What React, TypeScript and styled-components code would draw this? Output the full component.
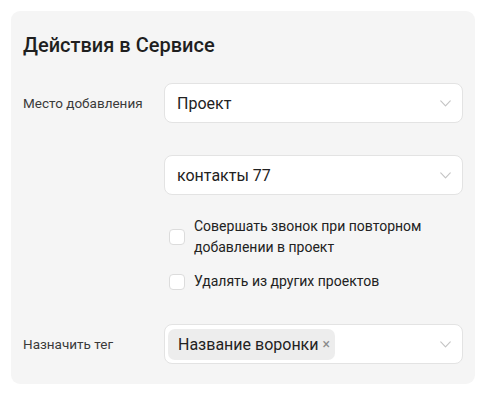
import styled, { createGlobalStyle } from 'styled-components';

const GlobalStyle = createGlobalStyle`
  html, body {
    margin: 0;
    padding: 0;
    background: #ffffff;
    font-family: Roboto, "Noto Sans", Arial, sans-serif;
    -webkit-font-smoothing: antialiased;
  }
  * {
    box-sizing: border-box;
  }
`;

const Chevron = () => (
  <svg width="11" height="7" viewBox="0 0 11 7" fill="none">
    <path d="M0.75 0.9L5.5 5.8L10.25 0.9" stroke="#c4c4c4" strokeWidth="1.1" strokeLinecap="round" strokeLinejoin="round" />
  </svg>
);

const Select = ({ children }: { children: React.ReactNode }) => (
  <SelectBox>
    <SelectValue>{children}</SelectValue>
    <Chevron />
  </SelectBox>
);

const Checkbox = ({ label }: { label: React.ReactNode }) => (
  <CheckRow>
    <CheckSquare />
    <CheckText>{label}</CheckText>
  </CheckRow>
);

export default function App() {
  return (
    <Page>
      <GlobalStyle />
      <Card>
        <Title>Действия в Сервисе</Title>
        <Form>
          <Label>Место добавления</Label>
          <Select>Проект</Select>

          <span />
          <Select>контакты 77</Select>

          <span />
          <CheckList>
            <Checkbox label={<>Совершать звонок при повторном<br />добавлении в проект</>} />
            <Checkbox label="Удалять из других проектов" />
          </CheckList>

          <Label>Назначить тег</Label>
          <Select>
            <Tag>
              Название воронки
              <TagClose>×</TagClose>
            </Tag>
          </Select>
        </Form>
      </Card>
    </Page>
  );
}

const Page = styled.div`
  padding: 11px 10px 10px 11px;
`;

const Card = styled.div`
  width: 464px;
  height: 373px;
  background: #f5f5f5;
  border-radius: 9px;
  padding: 22px 12px 20px 12px;
`;

const Title = styled.h2`
  margin: 0;
  font-size: 20px;
  line-height: 24px;
  font-weight: 500;
  color: #1f1f1f;
`;

const Form = styled.div`
  display: grid;
  grid-template-columns: 141px 1fr;
  align-items: center;
  row-gap: 32px;
  margin-top: 26px;
`;

const Label = styled.div`
  font-size: 13.5px;
  color: #3a3a3a;
`;

const SelectBox = styled.div`
  height: 40px;
  background: #ffffff;
  border: 1px solid #e3e3e3;
  border-radius: 8px;
  display: flex;
  align-items: center;
  padding: 0 11px 0 12px;
  gap: 8px;
`;

const SelectValue = styled.div`
  flex: 1;
  display: flex;
  align-items: center;
  font-size: 16px;
  color: #222222;
`;

const Tag = styled.div`
  display: flex;
  align-items: center;
  height: 31px;
  margin-left: -9px;
  padding: 0 5px 0 10px;
  background: #ededed;
  border-radius: 7px;
  font-size: 16px;
  color: #222222;
`;

const TagClose = styled.span`
  margin-left: 4px;
  font-size: 14px;
  color: #8a8a8a;
`;

const CheckList = styled.div`
  display: flex;
  flex-direction: column;
  gap: 13px;
  padding-left: 5px;
  margin: -11px 0 0;
`;

const CheckRow = styled.div`
  display: flex;
  align-items: center;
  gap: 9px;
`;

const CheckSquare = styled.div`
  width: 16px;
  height: 16px;
  flex-shrink: 0;
  background: #ffffff;
  border: 1px solid #dcdcdc;
  border-radius: 4px;
`;

const CheckText = styled.div`
  font-size: 14px;
  line-height: 21px;
  color: #222222;
`;
